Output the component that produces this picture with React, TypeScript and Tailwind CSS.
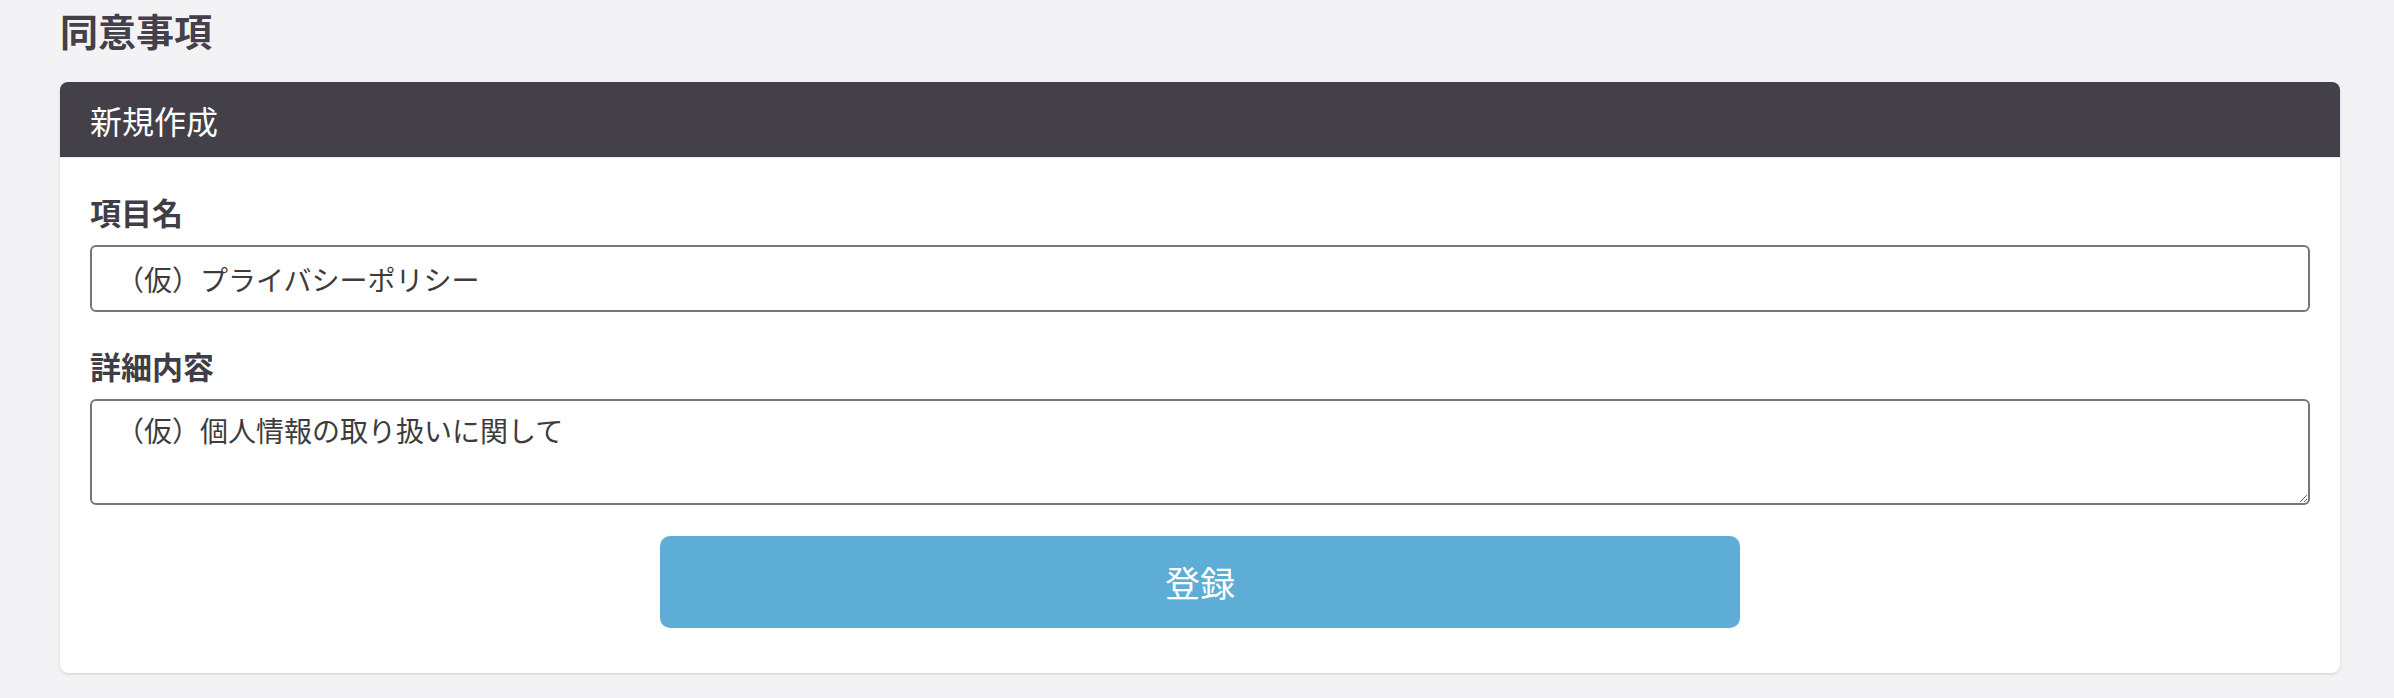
import { useState } from 'react';

export default function App() {
  const [name, setName] = useState('（仮）プライバシーポリシー');
  const [detail, setDetail] = useState('（仮）個人情報の取り扱いに関して');

  return (
    <div
      className="min-h-[698px] bg-[#f3f3f5] pl-[60px] pr-[54px]"
      style={{ fontFamily: '"Noto Sans CJK JP", "Noto Sans", sans-serif' }}
    >
      <h1 className="text-[38px] leading-[60px] font-bold text-[#434049]">同意事項</h1>

      <div className="mt-[22px] rounded-[8px] bg-white shadow-[0_1px_3px_rgba(0,0,0,0.15)]">
        <div className="flex h-[75px] items-center rounded-t-[8px] bg-[#434049] px-[30px] text-[32px] text-white">
          新規作成
        </div>
        <div className="h-px bg-[#e5e7eb]" />

        <form className="flex flex-col px-[30px] pt-[34px] pb-[45px]" onSubmit={(e) => e.preventDefault()}>
          <label className="text-[31px] leading-[40px] font-bold text-[#3f3d45]">項目名</label>
          <input
            value={name}
            onChange={(e) => setName(e.target.value)}
            className="mt-[13px] h-[67px] rounded-[6px] border-2 border-[#77767b] px-[24px] text-[28px] text-[#3c3c3c] outline-none"
          />

          <label className="mt-[34px] text-[31px] leading-[40px] font-bold text-[#3f3d45]">詳細内容</label>
          <textarea
            value={detail}
            onChange={(e) => setDetail(e.target.value)}
            className="mt-[13px] h-[106px] rounded-[6px] border-2 border-[#77767b] px-[24px] pt-[8px] text-[28px] leading-[42px] text-[#3c3c3c] outline-none"
          />

          <button
            type="submit"
            className="mx-auto mt-[31px] h-[92px] w-[1080px] rounded-[10px] bg-[#5eadd6] text-[35px] text-white"
          >
            登録
          </button>
        </form>
      </div>
    </div>
  );
}
